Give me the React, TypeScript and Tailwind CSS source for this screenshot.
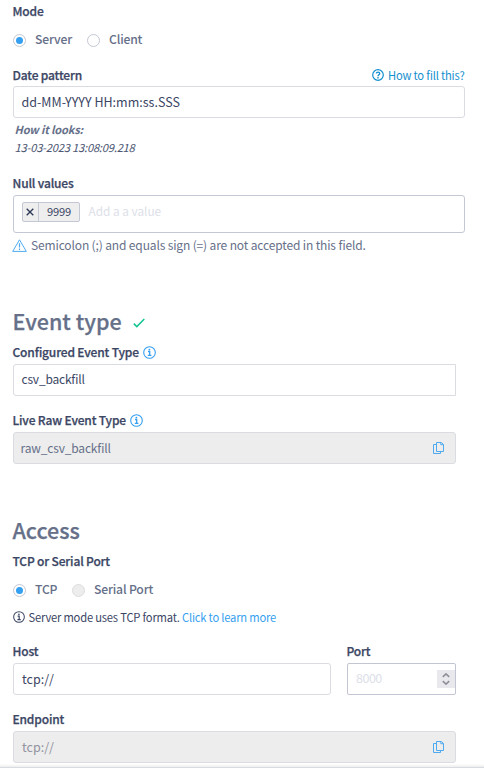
import type { ReactNode } from 'react';

const label = '-ml-[0.5px] text-[12px] font-medium leading-5 tracking-[-0.16px] text-[#3b4664] [-webkit-text-stroke:0.25px] [font-feature-settings:"liga"]';
const input = 'flex h-8 items-center rounded-l-[3px] border border-[#dadce1] px-2 text-[#3b4664]';
const heading = '-ml-[0.5px] text-[21.5px] font-medium leading-8 text-[#667089] [-webkit-text-stroke:0.25px]';

function Radio({ checked, disabled, children }: { checked?: boolean; disabled?: boolean; children: ReactNode }) {
  return (
    <div className="flex h-5 items-center">
      <span
        className={`mt-px flex size-[13px] items-center justify-center rounded-full border ${disabled ? 'border-[#dddde1] bg-[#ededed]' : 'border-[#c4c8d4] bg-white'}`}
      >
        {checked && <span className="size-[7px] rounded-full bg-[#359ff0]" />}
      </span>
      <span className="-mt-0.5 ml-[9px] text-[12.2px] font-medium leading-5 tracking-[-0.18px] text-[#667089]">{children}</span>
    </div>
  );
}

function InfoIcon({ className }: { className: string }) {
  return (
    <svg viewBox="0 0 13 13" className={className} fill="none" stroke="currentColor" strokeWidth="1.1">
      <circle cx="6.5" cy="6.5" r="5.8" />
      <path d="M5 5.5h1.7v3.8M4.8 9.3h3.6" strokeWidth="1.3" />
      <circle cx="6.4" cy="3.6" r=".9" fill="currentColor" stroke="none" />
    </svg>
  );
}

function CopyIcon() {
  return (
    <svg viewBox="0 0 12 13" className="h-[13px] w-3 text-[#4faaf0]" fill="none" stroke="currentColor" strokeWidth="1">
      <path d="M3.5.5h5l2 2v7h-7z" />
      <path d="M7.8.5v2.2h2.7" />
      <path d="M3.5 2.5h-3v9h7v-2" />
    </svg>
  );
}

export default function App() {
  return (
    <div className="flex h-[769px] w-[484px] flex-col overflow-hidden bg-white font-['Noto_Sans_CJK_SC',sans-serif]">
      <div className="flex flex-col pl-[13px] pr-[19px]">
        <div className={`mt-px ${label}`}>Mode</div>
        <div className="mt-[9px] flex h-5">
          <div className="w-[74px]"><Radio checked>Server</Radio></div>
          <Radio>Client</Radio>
        </div>
        <div className="mt-[15px] flex h-5 items-center justify-between">
          <span className={label}>Date pattern</span>
          <span className="mr-[0.5px] flex items-center text-[11.2px] leading-5 tracking-[-0.2px] text-[#1490cf] [font-feature-settings:'liga']">
            <svg viewBox="0 0 12 12" className="mr-1 size-3" fill="none" stroke="currentColor" strokeWidth="1.2">
              <circle cx="6" cy="6" r="5.3" />
              <path d="M4.4 4.6c0-2 3.3-1.9 3.3 0C7.7 5.8 6 5.8 6 7.2" strokeWidth="1.4" />
              <path d="M6 8.1v1.3" strokeWidth="1.4" />
            </svg>
            How to fill this?
          </span>
        </div>
        <div className={`mt-px rounded-r-[3px] text-[12.5px] ${input}`}>
          <span className="-ml-[0.5px]">dd-MM-YYYY HH:mm:ss.SSS</span>
        </div>
        <div className="mt-0.5 pl-[1.5px] text-[11px] font-bold italic leading-[18px] tracking-[-0.15px] text-[#667089]">How it looks:</div>
        <div className="pl-[1.5px] text-[11.2px] italic leading-[18px] tracking-[-0.22px] text-[#4d5773]">13-03-2023 13:08:09.218</div>
        <div className={`mt-[17px] ${label}`}>Null values</div>
        <div className="mt-0.5 flex h-[38px] items-start rounded-[3px] border border-[#c4c8d4] pl-2 pt-1.5">
          <div className="flex h-5 w-[58px] rounded-[2px] border border-[#c4c8d4] bg-[#eee]">
            <span className="flex w-4 items-center justify-center border-r border-[#c4c8d4]">
              <svg viewBox="0 0 8 8" className="-ml-px size-2 text-[#2c3654]" stroke="currentColor" strokeWidth="1.3">
                <path d="M.7.7l6.6 6.6M7.3.7L.7 7.3" />
              </svg>
            </span>
            <span className="-mt-px flex-1 text-center text-[11.2px] leading-[18px] tracking-[-0.2px] text-[#3b4664]">9999</span>
          </div>
          <span className="-mt-px ml-[8.5px] text-[11.8px] leading-5 text-[#dde0e8]">Add a a value</span>
        </div>
        <div className="mt-0.5 flex h-5 items-center text-[12px] leading-5 tracking-[-0.14px] text-[#667089] [font-feature-settings:'liga']">
          <svg viewBox="0 0 15 13" className="-ml-px mr-1 mt-px h-[13px] w-[15px] text-[#4faaf0]" fill="none" stroke="currentColor">
            <path d="M7.5.8L14.3 12.4H.7z" strokeLinejoin="round" />
            <path d="M7.5 4.2v4.4M7.5 9.6v1.4" strokeWidth="1.2" />
          </svg>
          Semicolon (;) and equals sign (=) are not accepted in this field.
        </div>
      </div>

      <div className="flex flex-col pl-[13px] pr-7">
        <div className={`mt-[50px] flex h-8 items-center ${heading}`}>
          Event type
          <svg viewBox="0 0 12 10" className="ml-[11px] mt-[3px] h-2.5 w-3 text-[#12c491]" fill="none" stroke="currentColor" strokeWidth="1.5">
            <path d="M.8 5.6l3 3L11.3 1" />
          </svg>
        </div>
        <div className={`mt-[5px] flex items-center ${label}`}>
          Configured Event Type
          <InfoIcon className="ml-1 size-[13px] text-[#359ff0]" />
        </div>
        <div className={`mt-0.5 pb-0.5 text-[12px] tracking-[-0.2px] [font-feature-settings:'liga'] ${input}`}>
          <span className="-ml-[0.5px]">csv_backfill</span>
        </div>
        <div className={`mt-3.5 flex items-center ${label}`}>
          Live Raw Event Type
          <InfoIcon className="ml-1 size-[13px] text-[#359ff0]" />
        </div>
        <div className="mt-0.5 flex h-8 items-center justify-between rounded-[3px] border border-[#dadce1] bg-[#ededed] pl-[6.5px] pr-2.5 text-[12px] tracking-[-0.17px] text-[#667089] [font-feature-settings:'liga']">
          raw_csv_backfill
          <CopyIcon />
        </div>
        <div className={`mt-[50px] ${heading}`}>Access</div>
        <div className={`mt-[5px] ${label}`}>TCP or Serial Port</div>
        <div className="mt-[9px] flex h-5">
          <div className="w-[59px]"><Radio checked>TCP</Radio></div>
          <Radio disabled>Serial Port</Radio>
        </div>
        <div className="-ml-[0.5px] mt-[7px] flex h-5 items-center whitespace-pre text-[11.2px] leading-5 tracking-[-0.2px] text-[#3b4664]">
          <InfoIcon className="mr-1 size-3" />
          <span>Server mode uses TCP format. </span>
          <span className="text-[#359ff0]">Click to learn more</span>
        </div>
        <div className="mt-3.5 flex gap-4">
          <div className="w-[318px]">
            <div className={label}>Host</div>
            <div className={`mt-0.5 rounded-r-[3px] text-[12.5px] ${input}`}>tcp://</div>
          </div>
          <div className="flex-1">
            <div className={label}>Port</div>
            <div className="mt-0.5 flex h-8 items-center justify-between rounded-[2px] border border-[#c4c5d2] pl-2 text-[12.5px] leading-5 text-[#dde0e8]">
              <span className="-mt-0.5 tracking-[-0.5px]">8000</span>
              <span className="flex h-[18px] w-[18px] items-center justify-center bg-[#e9e9ed]">
                <svg viewBox="0 0 8 12" className="h-3 w-2 text-[#8e8e98]" fill="none" stroke="currentColor" strokeWidth="1.6">
                  <path d="M.8 3.8L4 .9l3.2 2.9M.8 8.2L4 11.1l3.2-2.9" />
                </svg>
              </span>
            </div>
          </div>
        </div>
        <div className={`mt-3.5 ${label}`}>Endpoint</div>
        <div className="mt-0.5 flex h-8 items-center justify-between rounded-[3px] border border-[#dadce1] bg-[#ededed] pl-2 pr-2.5 text-[12.5px] text-[#9293a0]">
          tcp://
          <CopyIcon />
        </div>
      </div>
      <div className="mt-px h-[3px] shrink-0 bg-linear-to-b from-white to-[#eeeeef]" />
      <div className="h-px shrink-0 bg-[#d9dbe2]" />
    </div>
  );
}
